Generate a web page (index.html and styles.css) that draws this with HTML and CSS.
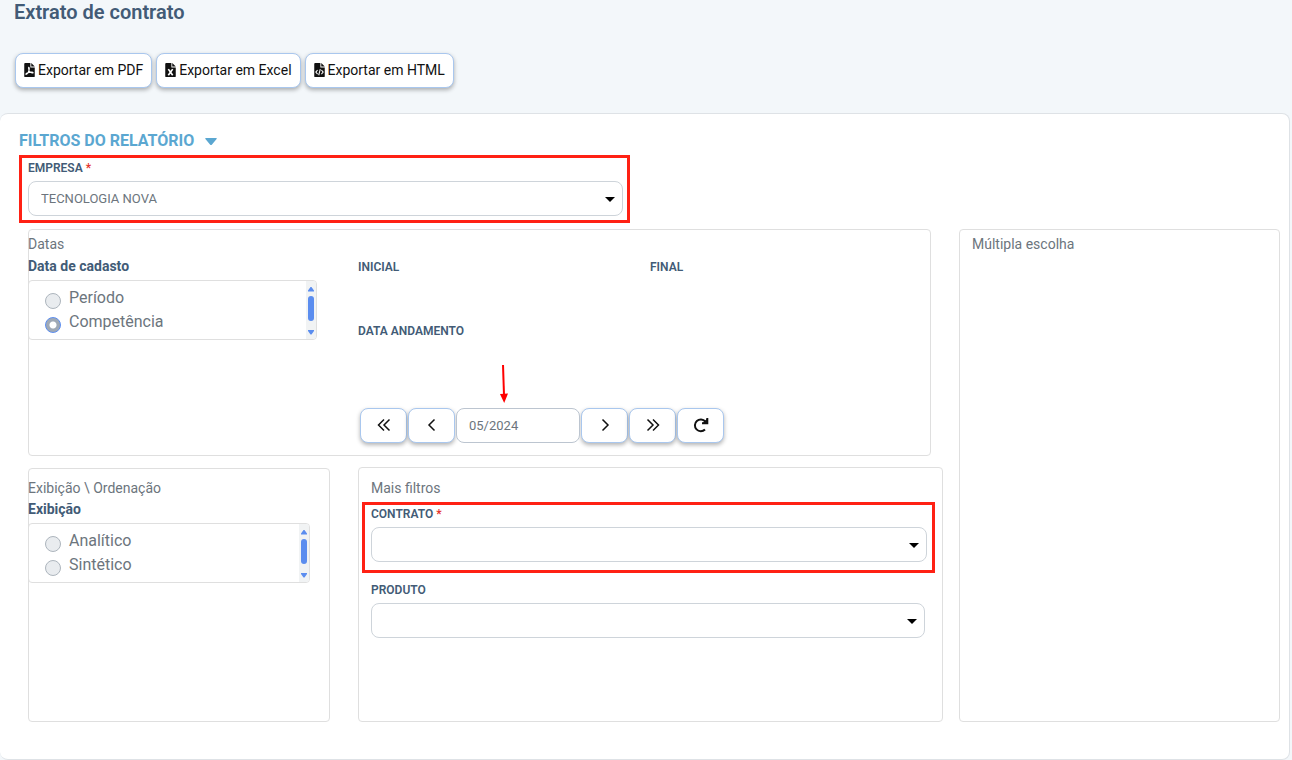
FILE: index.html
```html
<!DOCTYPE html>
<html lang="pt-BR">
<head>
<meta charset="utf-8">
<title>Extrato de contrato</title>
<link rel="stylesheet" href="styles.css">
</head>
<body>
<header class="page-header">
  <h1 class="page-title">Extrato de contrato</h1>
  <div class="export-bar">
    <button type="button" class="btn btn-export">
      <svg class="file-icon" viewBox="0 0 12 16" aria-hidden="true"><path fill="#111" d="M1 0h6v5h5v10a1 1 0 0 1-1 1H1a1 1 0 0 1-1-1V1a1 1 0 0 1 1-1z"/><path fill="#111" d="M8 0l4 4H8z"/><path fill="none" stroke="#fff" stroke-width="1.2" d="M5 5c1.2 0 .8 2 .4 3.200C4.800 10.500 3.200 13 2 13c-1-.8 2-2.600 7-2.600 1.800.1 1.400 1.500 0 1C7.200 10.800 4.200 8.500 5 5z"/></svg>
      Exportar em PDF</button>
    <button type="button" class="btn btn-export">
      <svg class="file-icon" viewBox="0 0 12 16" aria-hidden="true"><path fill="#111" d="M1 0h6v5h5v10a1 1 0 0 1-1 1H1a1 1 0 0 1-1-1V1a1 1 0 0 1 1-1z"/><path fill="#111" d="M8 0l4 4H8z"/><path fill="none" stroke="#fff" stroke-width="1.900" d="M3.500 7l5 7M8.500 7l-5 7"/></svg>
      Exportar em Excel</button>
    <button type="button" class="btn btn-export">
      <svg class="file-icon" viewBox="0 0 12 16" aria-hidden="true"><path fill="#111" d="M1 0h6v5h5v10a1 1 0 0 1-1 1H1a1 1 0 0 1-1-1V1a1 1 0 0 1 1-1z"/><path fill="#111" d="M8 0l4 4H8z"/><path fill="none" stroke="#fff" stroke-width="1.200" d="M3.800 8l-2 2.400 2 2.400M8.200 8l2 2.400-2 2.400M6.900 7l-1.800 7"/></svg>
      Exportar em HTML</button>
  </div>
</header>

<main class="card">
  <h2 class="section-title">Filtros do relatório
    <svg class="section-caret" viewBox="0 0 12 7" aria-hidden="true"><path fill="#5ba7d1" d="M1 0h10q1.500 0 .6 1L7 6.400q-1 1-2 0L.4 1Q-.5 0 1 0z"/></svg>
  </h2>

  <div class="field field-company highlight">
    <label class="field-label" for="empresa">EMPRESA <span class="required">*</span></label>
    <div class="select-wrap">
      <select class="control" id="empresa"><option>TECNOLOGIA NOVA</option></select>
      <svg class="select-arrow" viewBox="0 0 10 5" aria-hidden="true"><path d="M0 0h10L5 5z"/></svg>
    </div>
  </div>

  <div class="filters">
    <div class="filters-main">
      <section class="panel panel-dates">
        <div class="choice-column">
          <h3 class="panel-title">Datas</h3>
          <h4 class="group-title">Data de cadasto</h4>
          <div class="choice-box">
            <div class="choice-list">
              <label class="choice"><input class="radio" type="radio" name="data"> Período</label>
              <label class="choice"><input class="radio" type="radio" name="data" checked> Competência</label>
            </div>
            <svg class="scroll" viewBox="0 0 10 58" aria-hidden="true"><path fill="#f1f3f4" d="M0 0h10v58H0z"/><g fill="#5b8def"><path d="M2 10.500v-1L4.500 6h1L8 9.500v1zM2 49v1l2.500 3.500h1L8 50v-1z"/><rect x="2" y="15" width="6" height="25" rx="3"/></g></svg>
          </div>
        </div>
        <div class="period">
          <div class="period-labels">
            <span class="field-label">INICIAL</span>
            <span class="field-label">FINAL</span>
          </div>
          <label class="field-label label-progress" for="andamento">DATA ANDAMENTO</label>
          <div class="pager">
            <button type="button" class="btn btn-nav" aria-label="Retroceder ano"><svg class="nav-icon" viewBox="0 0 16 16"><path d="M8 2.500L2.500 8 8 13.500M13.500 2.500L8 8l5.500 5.500"/></svg></button>
            <button type="button" class="btn btn-nav" aria-label="Mês anterior"><svg class="nav-icon" viewBox="0 0 16 16"><path d="M10.500 2.500L5 8l5.500 5.500"/></svg></button>
            <div class="month">
              <input class="control month-input" id="andamento" type="text" value="05/2024">
              <svg class="pointer" viewBox="0 0 8 38" aria-hidden="true"><path stroke="#f00" stroke-width="2" d="M3 0l1 30"/><path fill="#f00" d="M0 29l8-.5L4.200 38z"/></svg>
            </div>
            <button type="button" class="btn btn-nav" aria-label="Próximo mês"><svg class="nav-icon" viewBox="0 0 16 16"><path d="M5.500 2.500L11 8l-5.500 5.500"/></svg></button>
            <button type="button" class="btn btn-nav" aria-label="Avançar ano"><svg class="nav-icon" viewBox="0 0 16 16"><path d="M2.500 2.500L8 8l-5.500 5.500M8 2.500L13.500 8 8 13.500"/></svg></button>
            <button type="button" class="btn btn-nav" aria-label="Recarregar"><svg class="nav-icon nav-reload" viewBox="0 0 16 16"><path d="M12.300 4.500A5.900 5.900 0 1 0 12 12.500M14.300 1v5.200H9"/><path class="solid" d="M14.800 1v5.700H9z"/></svg></button>
          </div>
        </div>
      </section>

      <section class="panel panel-display">
        <h3 class="panel-title">Exibição \ Ordenação</h3>
        <h4 class="group-title">Exibição</h4>
        <div class="choice-box choice-box-inset">
          <div class="choice-list">
            <label class="choice"><input class="radio" type="radio" name="exibicao"> Analítico</label>
            <label class="choice"><input class="radio" type="radio" name="exibicao"> Sintético</label>
          </div>
          <svg class="scroll" viewBox="0 0 10 58" aria-hidden="true"><path fill="#f1f3f4" d="M0 0h10v58H0z"/><g fill="#5b8def"><path d="M2 10.500v-1L4.500 6h1L8 9.500v1zM2 49v1l2.500 3.500h1L8 50v-1z"/><rect x="2" y="15" width="6" height="25" rx="3"/></g></svg>
        </div>
      </section>

      <section class="panel panel-more">
        <h3 class="panel-title">Mais filtros</h3>
        <div class="field field-contract highlight">
          <label class="field-label" for="contrato">CONTRATO <span class="required">*</span></label>
          <div class="select-wrap">
            <select class="control" id="contrato"><option></option></select>
            <svg class="select-arrow" viewBox="0 0 10 5" aria-hidden="true"><path d="M0 0h10L5 5z"/></svg>
          </div>
        </div>
        <div class="field field-product">
          <label class="field-label" for="produto">PRODUTO</label>
          <div class="select-wrap">
            <select class="control" id="produto"><option></option></select>
            <svg class="select-arrow" viewBox="0 0 10 5" aria-hidden="true"><path d="M0 0h10L5 5z"/></svg>
          </div>
        </div>
      </section>
    </div>

    <section class="panel panel-multi">
      <h3 class="panel-title">Múltipla escolha</h3>
    </section>
  </div>
</main>
</body>
</html>
```
FILE: styles.css
```css
* { box-sizing: border-box; }

body {
  margin: 0;
  background: #f3f7fa;
  color: #6c757d;
  font: 14px/20px Roboto, "Liberation Sans", sans-serif;
}

h1, h2, h3, h4 { margin: 0; }

.page-header { padding: 0 14px 25px 15px; }
.page-title {
  margin-left: -1px;
  color: #425b76;
  font-size: 20px;
  line-height: 24px;
  font-weight: 600;
}
.export-bar {
  display: flex;
  flex-wrap: wrap;
  gap: 4px;
  margin-top: 29px;
}

.btn {
  display: inline-flex;
  align-items: center;
  justify-content: center;
  height: 35px;
  padding: 0 0 2px;
  border: 1px solid #a9c7ee;
  border-radius: 8px;
  background: #fff;
  color: #111;
  font: inherit;
  box-shadow: 0 2px 4px rgba(0, 0, 0, 0.3);
}
.btn-export { gap: 3px; padding: 0 8px 2px; }
.file-icon { width: 11px; height: 14px; }

.card {
  margin-right: 2px;
  padding: 17px 9px 37px 28px;
  border: 1px solid #dee2e6;
  border-left: 0;
  border-radius: 8px;
  background: #fff;
}
.section-title {
  display: flex;
  align-items: center;
  gap: 11px;
  margin: 0 0 9px -9px;
  color: #5ba7d1;
  font-size: 16px;
  line-height: 20px;
  font-weight: 700;
  text-transform: uppercase;
}
.section-caret { width: 12px; height: 7px; }

.field { position: relative; }
.field-label {
  display: block;
  color: #425b76;
  font-size: 12px;
  line-height: 16px;
  font-weight: 600;
}
.required { color: #e5342b; }
.field-company { width: 47.5%; }
.highlight::after {
  content: "";
  position: absolute;
  inset: -5px -7px -7px -9px;
  border: 3px solid #ff2114;
  pointer-events: none;
}

.select-wrap { position: relative; margin-top: 5px; }
.control {
  display: block;
  width: 100%;
  height: 35px;
  padding: 0 12px;
  border: 1px solid #ced4da;
  border-radius: 8px;
  background: #fff;
  color: #6c757d;
  font: 13px/20px Roboto, "Liberation Sans", sans-serif;
  appearance: none;
}
.month-input { border-color: #bcc5d0; }
.select-arrow {
  position: absolute;
  right: 8px;
  top: 16px;
  width: 10px;
  height: 5px;
  pointer-events: none;
}

.filters {
  display: grid;
  grid-template-columns: 915fr 321fr;
  gap: 16px;
  margin-top: 13px;
}
.filters-main {
  display: grid;
  grid-template-columns: 302fr 585fr;
  grid-template-rows: 227px 255px;
  column-gap: 28px;
  row-gap: 11px;
}
.panel {
  border: 1px solid #dfdfdf;
  border-radius: 4px;
  background: #fff;
}
.panel-title {
  font-size: 14px;
  line-height: 20px;
  font-weight: 400;
}
.group-title {
  color: #425b76;
  font-size: 14px;
  line-height: 20px;
  font-weight: 700;
}

.panel-dates {
  grid-column: 1 / -1;
  display: grid;
  grid-template-columns: 288px 1fr;
  gap: 41px;
  margin-right: 12px;
  padding-top: 4px;
}
.choice-column, .panel-display { min-width: 0; }
.choice-column { margin-left: -1px; }
.choice-column .group-title { margin-top: 2px; }
.choice-box {
  display: flex;
  height: 60px;
  margin-top: 4px;
  border: 1px solid #dfdfdf;
  border-radius: 4px;
  overflow: hidden;
}
.choice-list { flex: 1; padding: 5px 16px 4px; }
.choice {
  display: flex;
  align-items: center;
  gap: 8px;
  font-size: 16px;
  line-height: 24px;
}
.radio {
  width: 16px;
  height: 16px;
  margin: 7px 0 1px;
  border: 1px solid #adb5bd;
  border-radius: 50%;
  background: #e9ecef;
  appearance: none;
}
.radio:checked {
  border-color: #5b8def;
  background: radial-gradient(circle, #fff 3px, #9fa9b5 4px);
}
.scroll { width: 10px; height: 58px; }

.period { padding-top: 25px; }
.period-labels {
  display: grid;
  grid-template-columns: 292fr 280fr;
}
.label-progress { margin-top: 48px; }
.pager {
  display: flex;
  gap: 1px;
  margin: 69px 0 0 2px;
}
.btn-nav { width: 47px; }
.nav-icon {
  width: 16px;
  height: 16px;
  fill: none;
  stroke: #111;
  stroke-width: 1.5;
}
.nav-reload { stroke-width: 2; }
.solid { fill: #111; stroke: none; }
.month { position: relative; width: 124px; }
.pointer {
  position: absolute;
  left: 44px;
  top: -43px;
  width: 8px;
  height: 38px;
}

.panel-display { margin-top: 1px; padding-top: 9px; }
.panel-display .panel-title,
.panel-display .group-title,
.choice-box-inset { margin-left: -1px; }
.panel-display .group-title { margin-top: 1px; }
.choice-box-inset { margin-right: 19px; }

.panel-more { padding: 10px 15px 0 12px; }
.field-contract { margin-top: 8px; }
.field-contract::after { inset: -4px -8px -11px -9px; }
.field-product { margin: 20px 2px 0 0; }

.panel-multi { padding: 4px 12px; }
```
